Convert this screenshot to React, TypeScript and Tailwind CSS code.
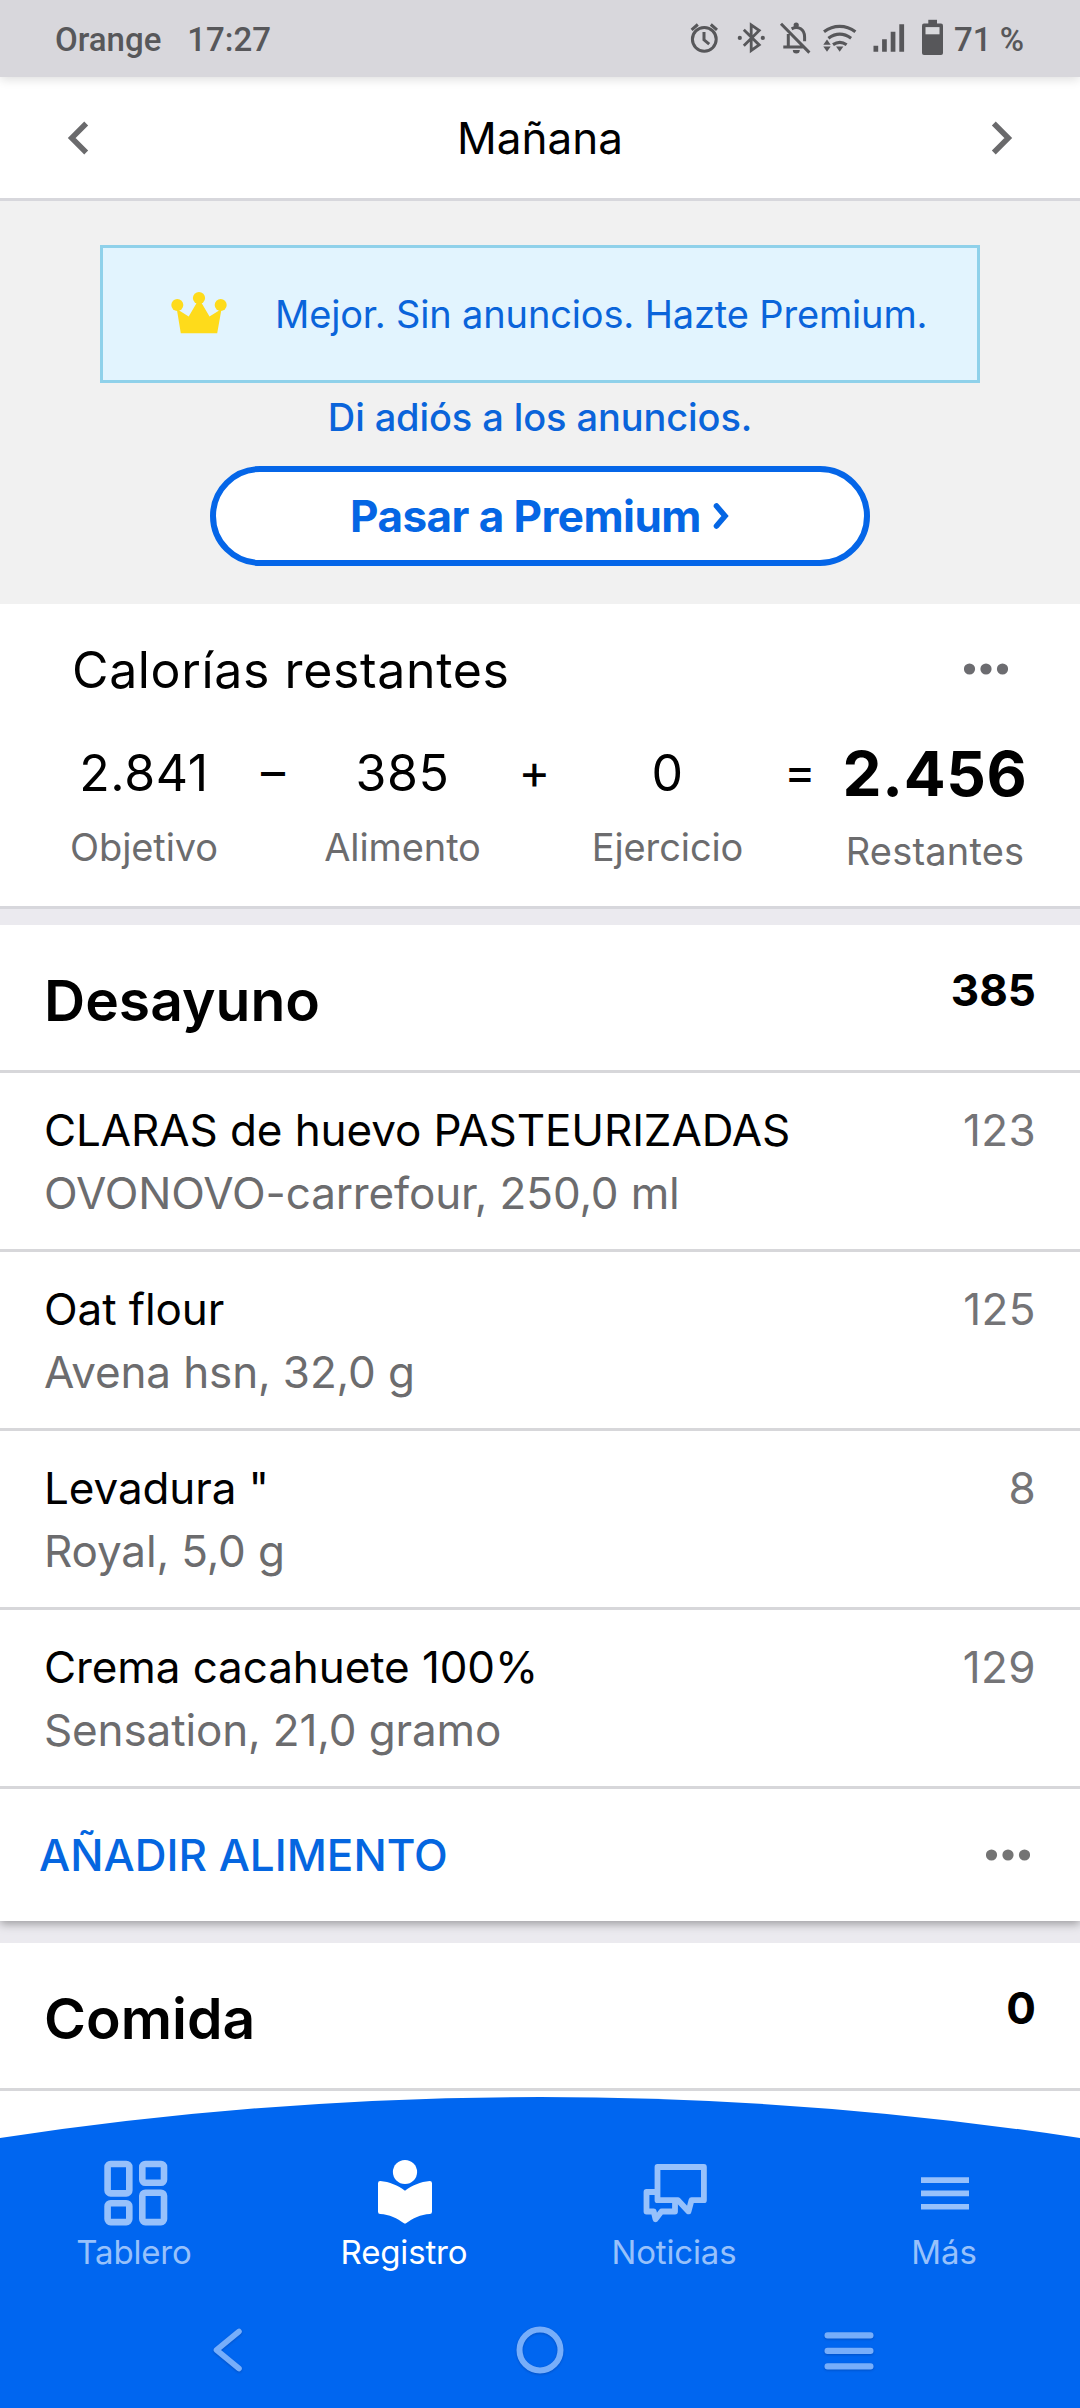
import React from "react";

const foods = [
  { name: "CLARAS de huevo PASTEURIZADAS", detail: "OVONOVO-carrefour, 250,0 ml", kcal: "123" },
  { name: "Oat flour", detail: "Avena hsn, 32,0 g", kcal: "125" },
  { name: 'Levadura "', detail: "Royal, 5,0 g", kcal: "8" },
  { name: "Crema cacahuete 100%", detail: "Sensation, 21,0 gramo", kcal: "129" },
];

function StatusBar() {
  return (
    <div className="relative z-10 flex h-[77px] items-center bg-[#d8d7dc] pl-[55px] pr-[56px] font-['Roboto',sans-serif] text-[33px] leading-[40px] font-medium text-[#57575a] shadow-[0_2px_10px_rgba(0,0,0,0.14)]">
      <span className="pt-[2px]">Orange</span>
      <span className="ml-[26px] pt-[2px]">17:27</span>
      <svg className="ml-auto" width="256" height="44" viewBox="690 17.500 256 44" fill="none" stroke="currentColor" strokeWidth="3">
        {/* alarm */}
        <circle cx="705.3" cy="39.8" r="11.9" />
        <path d="M692.6 30.4l6.2-5.4M718 30.4l-6.2-5.4" />
        <path d="M705 32.5v7.8l5.2 4.4" />
        {/* bluetooth */}
        <path d="M744.8 30.2l15.4 15.2-8 5.6V25.4l8 5.6-15.4 15.2" strokeWidth="2.8" />
        <circle cx="740.8" cy="38.4" r="2.1" fill="currentColor" stroke="none" />
        <circle cx="763.8" cy="38.4" r="2.1" fill="currentColor" stroke="none" />
        {/* muted bell */}
        <path d="M782 24.3l28.4 28.8M789.3 34.5v12.8M784.3 47.4h19.5" />
        <path d="M792.6 29.3c7-3.6 13 1 13 8.2v4.2" />
        <circle cx="797.2" cy="25.6" r="2.6" fill="currentColor" stroke="none" />
        <path d="M793.8 50.4h7a3.5 3.5 0 0 1-7 0z" fill="currentColor" stroke="none" />
        {/* wifi */}
        <path d="M825 32.3c9.600-7.200 21.800-7.200 31.400 0M829.400 38.800c7.200-5.200 15.500-5.200 22.700 0M834 45.2c4.500-3 9.200-3 13.600 0" strokeWidth="3.200" />
        <path d="M824.300 45.200l3.700-5.200 3.700 5.200zM824.300 47l3.700 5.300 3.700-5.300zM837 47l3.700 5.300 3.700-5.300z" fill="currentColor" stroke="none" />
        {/* signal */}
        <path d="M874.500 46.300h4.700v6h-4.700zM883.100 39.700h4.700v12.600h-4.700zM891.700 32.300h4.700v20h-4.700zM900.300 24.700h4.800v27.600h-4.800z" fill="currentColor" stroke="none" />
        {/* battery */}
        <rect x="923" y="24" width="21" height="31.600" rx="2" fill="currentColor" stroke="none" />
        <rect x="929.300" y="20.300" width="8.700" height="5" fill="currentColor" stroke="none" />
        <rect x="926.500" y="27.600" width="14" height="7.200" fill="#d9d9dc" stroke="none" />
      </svg>
      <span className="ml-[9px] pt-[2px]">71 %</span>
    </div>
  );
}

function DateHeader() {
  return (
    <div className="flex h-[124px] items-center justify-between border-b-[3px] border-[#d7d7dc] bg-white px-[66px]">
      <svg width="24" height="36" viewBox="66 119.500 24 36" fill="none" stroke="#6a6a6c" strokeWidth="5.500">
        <path d="M86.200 123l-14.500 14.500L86.200 152" />
      </svg>
      <span className="text-[44px] leading-[54px]">Mañana</span>
      <svg width="24" height="36" viewBox="992 119.500 24 36" fill="none" stroke="#6a6a6c" strokeWidth="5.500">
        <path d="M995.800 123l14.500 14.500-14.500 14.500" />
      </svg>
    </div>
  );
}

function PremiumBanner() {
  return (
    <div className="flex h-[403px] flex-col items-center bg-[#f1f1f1] pt-[44px]">
      <div className="flex h-[138px] w-[880px] items-center border-[3px] border-[#8fd1ea] bg-[#e2f4fe] pl-[67px] text-[#0a64da]">
        <svg className="mb-[2px]" width="58" height="44" viewBox="170 291 58 44" fill="#fedb1b">
          <circle cx="177.300" cy="305" r="6" />
          <circle cx="199" cy="298" r="6.100" />
          <circle cx="220.700" cy="305" r="6" />
          <path d="M176.800 309l11.900 7.600 8.500-14.600h3.800l8.500 14.600 12-7.600-4.300 24.300h-36.400z" />
        </svg>
        <span className="ml-[47px] text-[38px] leading-[46px] tracking-[-0.15px] whitespace-nowrap">
          Mejor. Sin anuncios. Hazte Premium.
        </span>
      </div>
      <span className="mt-[11px] text-[38px] leading-[46px] font-medium tracking-[-0.1px] text-[#0a64da]">
        Di adiós a los anuncios.
      </span>
      <button className="mt-[26px] flex h-[100px] w-[660px] items-center rounded-full border-[6px] border-[#0566e8] bg-white pl-[134px] text-[#0566e4]">
        <span className="text-[44px] leading-[54px] font-bold tracking-[-0.55px]">Pasar a Premium</span>
        <svg className="ml-[10px]" width="20" height="30" viewBox="712 501 20 30" fill="none" stroke="currentColor" strokeWidth="5.600" strokeLinecap="round">
          <path d="M717.500 506l8.500 10-8.500 10" />
        </svg>
      </button>
    </div>
  );
}

function Dots({ className }: { className: string }) {
  return (
    <svg className={className} width="44" height="12" viewBox="0 0 44 12" fill="currentColor">
      <circle cx="5.500" cy="6" r="5.600" />
      <circle cx="22" cy="6" r="5.600" />
      <circle cx="38.500" cy="6" r="5.600" />
    </svg>
  );
}

function Figure({ value, label }: { value: string; label: string }) {
  return (
    <div className="flex flex-col items-center">
      <span className="text-[50px] leading-[60px] tracking-[0.65px]">{value}</span>
      <span className="mt-[21px] text-[38px] leading-[46px] tracking-[-0.1px] text-[#6c6c6e]">{label}</span>
    </div>
  );
}

function Operator({ sign }: { sign: string }) {
  return <span className="text-center text-[48px] leading-[58px]">{sign}</span>;
}

function Summary() {
  return (
    <div className="h-[305px] border-b-[3px] border-[#d7d7dc] bg-white pt-[36px]">
      <div className="flex items-center justify-between px-[72px]">
        <h2 className="text-[50px] leading-[60px] tracking-[0.63px]">Calorías restantes</h2>
        <Dots className="mb-[3px] text-[#6c6c70]" />
      </div>
      <div className="mt-[43px] grid grid-cols-[180px_78px_181px_83px_183px_82px_188px] pl-[54px]">
        <Figure value="2.841" label="Objetivo" />
        <Operator sign="–" />
        <Figure value="385" label="Alimento" />
        <Operator sign="+" />
        <Figure value="0" label="Ejercicio" />
        <Operator sign="=" />
        <div className="flex flex-col items-center">
          <span className="text-[62px] leading-[62px] font-bold tracking-[0.67px]">2.456</span>
          <span className="mt-[23px] text-[38px] leading-[46px] tracking-[0.2px] text-[#6c6c6e]">Restantes</span>
        </div>
      </div>
    </div>
  );
}

function MealHeader({ title, total }: { title: string; total: string }) {
  return (
    <div className="flex h-[148px] items-start justify-between border-b-[3px] border-[#d7d7da] bg-white px-[44px] pt-[40px]">
      <h3 className="pt-[1px] text-[57px] leading-[70px] font-semibold">{title}</h3>
      <span className="text-[44px] leading-[50px] font-bold">{total}</span>
    </div>
  );
}

function NavItem({ label, active, children }: { label: string; active?: boolean; children: React.ReactNode }) {
  return (
    <div className={active ? "flex flex-col items-center text-white" : "flex flex-col items-center text-[#97c1fb]"}>
      {children}
      <span className="mt-[5px] pr-[2px] text-[33px] leading-[40px] tracking-[-0.15px]">{label}</span>
    </div>
  );
}

function BottomNav() {
  return (
    <div className="bg-white pt-[6px]">
      <svg className="block" width="1080" height="41" viewBox="0 0 1080 41" fill="#0066f0">
        <path d="M0 41Q540-41 1080 41z" />
      </svg>
      <div className="h-[270px] bg-[#0066f0] pt-[21px]">
        <div className="grid grid-cols-4">
          <NavItem label="Tablero">
            <svg width="70" height="68" viewBox="100.500 2159 70 68" fill="none" stroke="currentColor" strokeWidth="6.600">
              <rect x="108.100" y="2164" width="21.700" height="29.400" rx="3" />
              <rect x="142.800" y="2164" width="21.700" height="18.800" rx="3" />
              <rect x="108.100" y="2203.300" width="21.700" height="18.800" rx="3" />
              <rect x="142.800" y="2192.700" width="21.700" height="29.400" rx="3" />
            </svg>
          </NavItem>
          <NavItem label="Registro" active>
            <svg width="70" height="68" viewBox="370 2159 70 68" fill="currentColor">
              <circle cx="405" cy="2172" r="12.100" />
              <path d="M405 2190.700c-7-5.200-15.500-8.900-24.800-9.700q-2.200 0-2.200 2.200v28.600q0 2.200 2.200 2.200c9 .3 17.400 4.700 23.400 9.100q1.400 1 2.800 0c6-4.400 14.400-8.800 23.400-9.100q2.200 0 2.200-2.200v-28.600q0-2.200-2.200-2.200c-9.300.8-17.800 4.500-24.800 9.700z" />
            </svg>
          </NavItem>
          <NavItem label="Noticias">
            <svg width="70" height="68" viewBox="640.500 2159 70 68" fill="none" stroke="currentColor" strokeWidth="5.800" strokeLinejoin="round">
              <path d="M658 2167h46.400v33.200H692l-3 11.200-10.500-11.200H658z" />
              <path d="M658 2192h-11v19.500h7.200l1.800 7.700 6-7.700h13.500V2201" />
            </svg>
          </NavItem>
          <NavItem label="Más">
            <svg width="70" height="68" viewBox="911 2159 70 68" fill="currentColor">
              <path d="M922 2177.200h48v5.700h-48zM922 2190.600h48v5.600h-48zM922 2204h48v5.600h-48z" />
            </svg>
          </NavItem>
        </div>
        <div className="mt-[54px] flex items-center justify-between pl-[203px] pr-[206px] text-[#77aefa]">
          <svg className="drop-shadow-[0_1px_1px_rgba(0,40,120,0.35)]" width="48" height="48" viewBox="203 2326.500 48 48" fill="none" stroke="currentColor" strokeWidth="5.600" strokeLinecap="round" strokeLinejoin="round">
            <path d="M239 2332l-22.500 18.500 22.500 18.500" />
          </svg>
          <svg className="ml-[5px] drop-shadow-[0_1px_1px_rgba(0,40,120,0.35)]" width="48" height="48" viewBox="0 0 48 48" fill="none" stroke="currentColor" strokeWidth="6">
            <circle cx="24" cy="24" r="20.500" />
          </svg>
          <svg className="drop-shadow-[0_1px_1px_rgba(0,40,120,0.35)]" width="50" height="48" viewBox="825 2326.500 50 48" fill="currentColor">
            <rect x="825.500" y="2332.800" width="49" height="6.200" rx="3" />
            <rect x="825.500" y="2348.300" width="49" height="6.200" rx="3" />
            <rect x="825.500" y="2363.800" width="49" height="6.200" rx="3" />
          </svg>
        </div>
      </div>
    </div>
  );
}

export default function App() {
  return (
    <div className="h-[2408px] w-[1080px] overflow-hidden bg-[#ebeaef] font-['Inter',sans-serif] text-black">
      <StatusBar />
      <DateHeader />
      <PremiumBanner />
      <Summary />
      <div className="relative mt-[16px] bg-white shadow-[0_3px_9px_rgba(0,0,0,0.34)] [clip-path:inset(0_0_-22px_0)]">
        <MealHeader title="Desayuno" total="385" />
        {foods.map((food) => (
          <div key={food.name} className="flex justify-between border-b-[3px] border-[#d7d7da] px-[44px] pt-[26px] pb-[24px] text-[44px] leading-[63px]">
            <div>
              <p className="tracking-[-0.1px]">{food.name}</p>
              <p className="tracking-[-0.13px] text-[#6c6c6e]">{food.detail}</p>
            </div>
            <span className="tracking-[0.4px] text-[#747477]">{food.kcal}</span>
          </div>
        ))}
        <div className="flex h-[132px] items-center justify-between pl-[39px] pr-[50px]">
          <span className="text-[44px] leading-[54px] font-medium text-[#0566e0]">AÑADIR ALIMENTO</span>
          <Dots className="text-[#747474]" />
        </div>
      </div>
      <div className="relative mt-[22px]">
        <MealHeader title="Comida" total="0" />
      </div>
      <BottomNav />
    </div>
  );
}
